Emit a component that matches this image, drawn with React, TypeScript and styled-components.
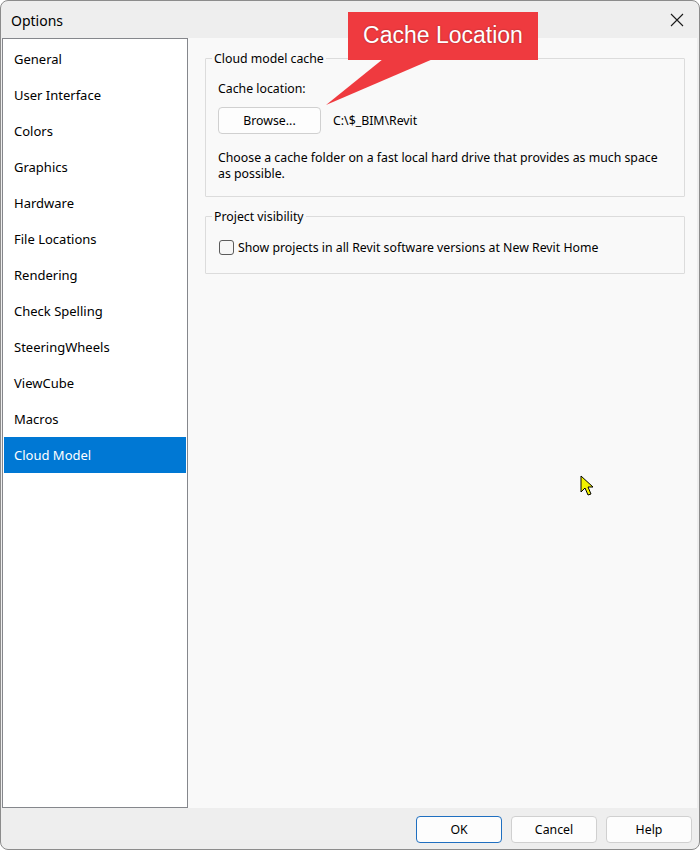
import styled, { createGlobalStyle } from "styled-components";

const GlobalStyle = createGlobalStyle`
    html, body {
        margin: 0;
        padding: 0;
        background: #ffffff;
    }
    * {
        box-sizing: border-box;
    }
`;

const Window = styled.div`
    position: relative;
    width: 700px;
    height: 850px;
    display: flex;
    flex-direction: column;
    background-color: #eeeeee;
    border: 1px solid #8c8c8c;
    border-radius: 8px;
    overflow: hidden;
    font-family: "Noto Sans", "Liberation Sans", sans-serif;
    color: #000000;
`;

const TitleBar = styled.div`
    height: 37px;
    flex: none;
    display: flex;
    align-items: center;
    justify-content: space-between;
    padding: 0 12px 0 10px;
`;

const Title = styled.div`
    font-size: 14px;
    margin-top: 1px;
`;

const CloseIcon = styled.svg`
    width: 14px;
    height: 14px;
    margin-right: 3px;
`;

const Body = styled.div`
    flex: 1;
    display: flex;
    padding-left: 1px;
    padding-right: 2px;
    min-height: 0;
`;

const CategoryList = styled.ul`
    width: 186px;
    flex: none;
    margin: 0;
    padding: 2px 1px 0 1px;
    list-style: none;
    background-color: #ffffff;
    border: 1px solid #85878c;
`;

const CategoryItem = styled.li<{ $selected?: boolean }>`
    height: 36px;
    display: flex;
    align-items: center;
    padding-left: 10px;
    font-size: 13px;
    color: ${(p) => (p.$selected ? "#ffffff" : "#000000")};
    background-color: ${(p) => (p.$selected ? "#0078d4" : "transparent")};
`;

const Content = styled.div`
    flex: 1;
    background-color: #f9f9f9;
    padding: 12px 12px 0 17px;
    display: flex;
    flex-direction: column;
    gap: 11px;
`;

const GroupBox = styled.fieldset`
    margin: 0;
    border: 1px solid #dcdcdc;
    border-radius: 1px;
    padding: 14px 12px 14px 12px;
    min-width: 0;
`;

const Legend = styled.legend`
    font-size: 12.3px;
    padding: 0 2px;
    margin-left: -6px;
`;

const Label = styled.div`
    font-size: 12.3px;
    line-height: 16px;
`;

const PathRow = styled.div`
    display: flex;
    align-items: center;
    gap: 12px;
    margin: 10px 0 16px 0;
`;

const Button = styled.button<{ $default?: boolean }>`
    width: ${(p) => (p.$default !== undefined ? "86px" : "103px")};
    height: 27px;
    padding: 0;
    font-family: "Noto Sans", "Liberation Sans", sans-serif;
    font-size: 12.3px;
    color: #000000;
    background-color: #fdfdfd;
    border: 1px solid ${(p) => (p.$default ? "#1f6fc0" : "#d0d0d0")};
    border-radius: 4px;
`;

const CheckRow = styled.label`
    display: flex;
    align-items: center;
    gap: 4px;
    margin: 0 0 3px 0;
    font-size: 12.3px;
`;

const CheckBox = styled.span`
    width: 15px;
    height: 15px;
    border: 1px solid #5b5b5b;
    border-radius: 3px;
    background-color: #f6f6f6;
    margin-left: 1px;
`;

const Footer = styled.div`
    height: 41px;
    flex: none;
    display: flex;
    align-items: center;
    justify-content: flex-end;
    gap: 9px;
    padding: 1px 7px 0 0;
`;

const Callout = styled.div`
    position: absolute;
    left: 347px;
    top: 11px;
    width: 190px;
    height: 48px;
    background-color: #ef3a3f;
    color: #ffffff;
    font-family: "Liberation Sans", Arial, sans-serif;
    font-size: 23px;
    display: flex;
    align-items: center;
    justify-content: center;
    padding-bottom: 2px;
    text-shadow: 0 0 2px rgba(0, 0, 0, 0.35);
`;

const CalloutTail = styled.svg`
    position: absolute;
    left: 320px;
    top: 58px;
    width: 120px;
    height: 50px;
`;

const Cursor = styled.svg`
    position: absolute;
    left: 579px;
    top: 474px;
    width: 16px;
    height: 22px;
`;

const categories = [
    "General",
    "User Interface",
    "Colors",
    "Graphics",
    "Hardware",
    "File Locations",
    "Rendering",
    "Check Spelling",
    "SteeringWheels",
    "ViewCube",
    "Macros",
    "Cloud Model",
];

function App(): JSX.Element {
    return (
        <>
            <GlobalStyle />
            <Window>
                <TitleBar>
                    <Title>Options</Title>
                    <CloseIcon viewBox="0 0 14 14">
                        <path d="M1 1 L13 13 M13 1 L1 13" stroke="#1a1a1a" strokeWidth="1.1" />
                    </CloseIcon>
                </TitleBar>
                <Body>
                    <CategoryList>
                        {categories.map((c) => (
                            <CategoryItem key={c} $selected={c === "Cloud Model"}>
                                {c}
                            </CategoryItem>
                        ))}
                    </CategoryList>
                    <Content>
                        <GroupBox>
                            <Legend>Cloud model cache</Legend>
                            <Label>Cache location:</Label>
                            <PathRow>
                                <Button>Browse...</Button>
                                <Label>C:\$_BIM\Revit</Label>
                            </PathRow>
                            <Label>
                                Choose a cache folder on a fast local hard drive that provides as much space
                                as possible.
                            </Label>
                        </GroupBox>
                        <GroupBox>
                            <Legend>Project visibility</Legend>
                            <CheckRow>
                                <CheckBox />
                                Show projects in all Revit software versions at New Revit Home
                            </CheckRow>
                        </GroupBox>
                    </Content>
                </Body>
                <Footer>
                    <Button $default>OK</Button>
                    <Button $default={false}>Cancel</Button>
                    <Button $default={false}>Help</Button>
                </Footer>
                <CalloutTail viewBox="0 0 120 50">
                    <polygon points="62,0 112,0 5,46" fill="#ef3a3f" />
                </CalloutTail>
                <Callout>Cache Location</Callout>
                <Cursor viewBox="0 0 16 22">
                    <path
                        d="M1 1 L1 17 L5 13 L8 20 L11 19 L8 12 L13 12 Z"
                        fill="#f2f200"
                        stroke="#000000"
                        strokeWidth="1"
                        strokeLinejoin="round"
                    />
                </Cursor>
            </Window>
        </>
    );
}

export default App;
